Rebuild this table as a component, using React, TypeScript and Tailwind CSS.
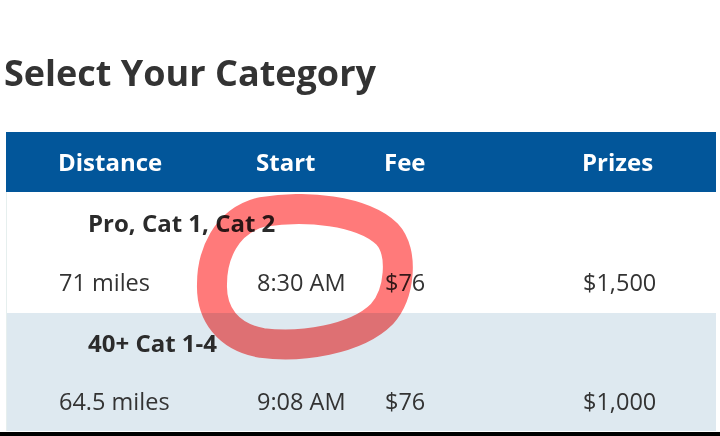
import React from "react";

const font = { fontFamily: '"Open Sans", "Noto Sans", sans-serif' };

function Row({ title, cells, bg }: { title: string; cells: string[]; bg: string }) {
  return (
    <div className={`${bg} flex flex-col`}>
      <div className="h-[60px] flex items-center pl-[81px] text-[24px] font-bold text-[#2b2b2b]">{title}</div>
      <div className="h-[60px] grid grid-cols-[198px_128px_198px_1fr] items-center pl-[52px] text-[23.5px] text-[#333]">
        {cells.map((c, i) => (
          <div key={i}>{c}</div>
        ))}
      </div>
    </div>
  );
}

export default function App() {
  return (
    <div className="relative w-[720px] h-[436px] bg-white overflow-hidden" style={font}>
      <div className="pt-[47px] pl-[4px] h-[132px]">
        <h1 className="text-[36px] font-bold text-[#333] leading-[52px]">Select Your Category</h1>
      </div>
      <div className="ml-[6px] w-[710px] flex flex-col">
        <div className="h-[60px] bg-[#02569a] grid grid-cols-[198px_128px_198px_1fr] items-center pl-[52px] text-[24px] font-bold text-white">
          <div>Distance</div>
          <div>Start</div>
          <div>Fee</div>
          <div>Prizes</div>
        </div>
        <div className="border-l border-[#e6efee]">
          <Row title="Pro, Cat 1, Cat 2" cells={["71 miles", "8:30 AM", "$76", "$1,500"]} bg="bg-white h-[122px] pt-[1px]" />
          <Row title="40+ Cat 1-4" cells={["64.5 miles", "9:08 AM", "$76", "$1,000"]} bg="bg-[#dee9f0] h-[118px] -mt-[1px]" />
        </div>
      </div>
      <div className="absolute left-0 right-0 bottom-0 h-[4px] bg-black" />
      <svg className="absolute left-0 top-0 mix-blend-multiply" width="720" height="436" viewBox="0 0 720 436">
        <path
          d="M 262 212 C 305 205, 362 210, 387 234 C 404 252, 400 294, 382 314 C 356 340, 300 348, 262 343 C 228 337, 211 314, 212 284 C 212 256, 225 221, 262 212 Z"
          fill="none"
          stroke="#ff7a7a"
          strokeWidth="30"
          strokeLinejoin="round"
        />
      </svg>
    </div>
  );
}
